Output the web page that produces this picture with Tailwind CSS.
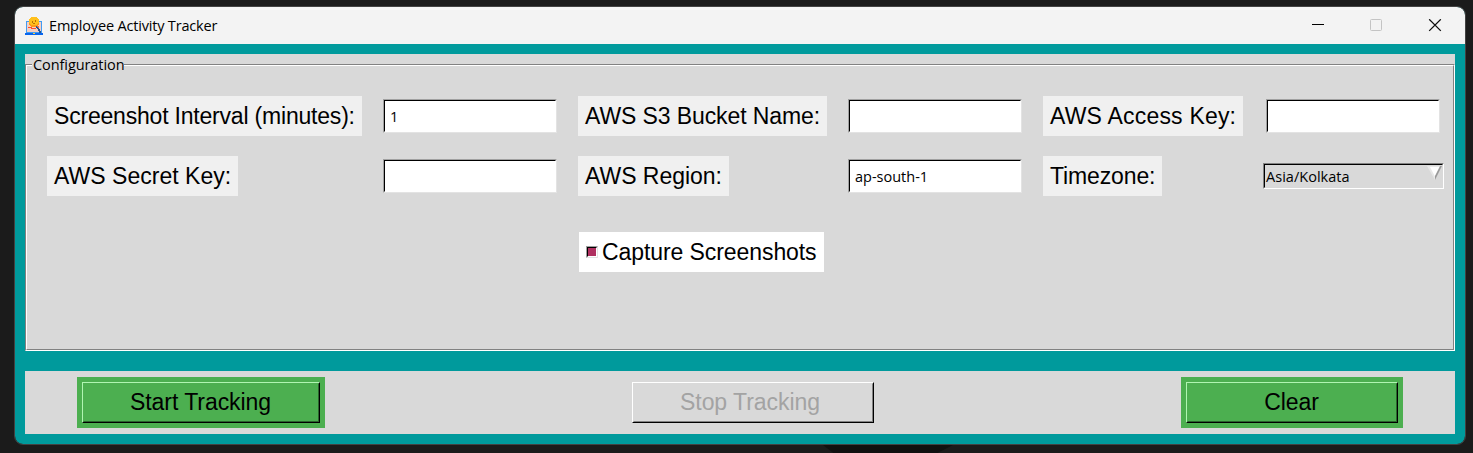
<!DOCTYPE html>
<html lang="en">
<head>
<meta charset="utf-8">
<title>Employee Activity Tracker</title>
<script src="https://cdn.jsdelivr.net/npm/@tailwindcss/browser@4"></script>
</head>
<body class="h-[453px] w-[1473px] overflow-hidden bg-[#1b1b1b] pl-[15px] pt-[7px] text-black font-['Liberation_Sans',Arial,sans-serif]">
<div class="flex h-[437px] w-[1450px] flex-col overflow-hidden rounded-lg bg-[#009a9c] outline outline-[#424242]">
  <header class="flex h-[37px] shrink-0 items-center bg-[#f3f3f3] pl-[10px] font-['Open_Sans','Noto_Sans',sans-serif]">
    <svg class="h-[18px] w-[18px]" viewBox="0 0 18 18" shape-rendering="crispEdges">
      <path d="M1 4h16v12H1z" fill="#419cf3"/>
      <path d="M2 5h14v10H2z" fill="#f5cfc3"/>
      <path d="M6 0h6v1h1v1h1v6h-1v1h-1v1H6V9H5V8H4V2h1V1h1z" fill="#ffc01c"/>
      <path d="M4 6h1v1h1v1h6V7h1V6h1v2h-1v1h-1v1H6V9H5V8H4z" fill="#ff9a15"/>
      <path d="M7 4h1v2H7zM10 3h1v2h-1zM8 6h2v1H8z" fill="#b77208"/>
      <path d="M3 10h4v1h4v1H6v-1H3z" fill="#ff4d2b"/>
      <path d="M11 9h1v1h1v1h1v1h1v2h1v2h-2v-2h-1v-2h-1v-1h-1z" fill="#27548f"/>
      <path d="M12 9h2v2h-1v-1h-1z" fill="#f26b42"/>
      <path d="M0 16h18v2H0z" fill="#0865ef"/>
      <path d="M8 16h2v1H8z" fill="#ffd339"/>
    </svg>
    <span class="ml-[6px] whitespace-nowrap text-[14.5px] tracking-[-0.18px]">Employee Activity Tracker</span>
    <div class="ml-auto flex items-center pr-[23px]">
      <svg class="h-[14px] w-[14px]" viewBox="0 0 14 14"><path d="M1 5.5h12" stroke="#000"/></svg>
      <svg class="ml-[44px] h-[14px] w-[14px]" viewBox="0 0 14 14"><rect x="1.5" y=".5" width="11" height="11" rx="1" fill="none" stroke="#c4c4c4"/></svg>
      <svg class="ml-[45px] h-[14px] w-[14px]" viewBox="0 0 14 14"><path d="M1.2.3l11.6 11.6M12.8.3L1.2 11.9" stroke="#111" stroke-width="1.3"/></svg>
    </div>
  </header>

  <main class="flex flex-col gap-5 p-[10px]">
    <section class="relative h-[297px] bg-[#d9d9d9] pt-[10px]">
      <div class="h-[287px] border border-[#828282] border-b-white border-r-white">
        <div class="h-[285px] border border-white border-b-[#828282] border-r-[#828282] pl-[20px] pt-[30px]">
          <div class="grid grid-cols-[336px_195px_270px_195px_220px_181px] grid-rows-[40px_40px] items-center gap-y-5 text-[23px] whitespace-nowrap">
            <label class="flex h-10 w-[315px] items-center bg-[#f0f0f0] pl-[7px] tracking-[-0.2px]">Screenshot Interval (minutes):</label>
            <div class="h-[34px] w-[174px] border border-[#a0a0a0] border-b-[#e3e3e3] border-r-[#e3e3e3]"><div class="flex h-8 items-center border border-black border-b-white border-r-white bg-white pl-[5px] pt-[2px] text-[14.5px] font-['Open_Sans','Noto_Sans',sans-serif]">1</div></div>
            <label class="flex h-10 w-[249px] items-center bg-[#f0f0f0] pl-[7px] tracking-[-0.1px]">AWS S3 Bucket Name:</label>
            <div class="h-[34px] w-[174px] border border-[#a0a0a0] border-b-[#e3e3e3] border-r-[#e3e3e3]"><div class="h-8 border border-black border-b-white border-r-white bg-white"></div></div>
            <label class="flex h-10 w-[200px] items-center bg-[#f0f0f0] pl-[7px] tracking-[0.2px]">AWS Access Key:</label>
            <div class="ml-[3px] h-[34px] w-[174px] border border-[#a0a0a0] border-b-[#e3e3e3] border-r-[#e3e3e3]"><div class="h-8 border border-black border-b-white border-r-white bg-white"></div></div>

            <label class="flex h-10 w-[191px] items-center bg-[#f0f0f0] pl-[7px] tracking-[0.03px]">AWS Secret Key:</label>
            <div class="h-[34px] w-[174px] border border-[#a0a0a0] border-b-[#e3e3e3] border-r-[#e3e3e3]"><div class="h-8 border border-black border-b-white border-r-white bg-white"></div></div>
            <label class="flex h-10 w-[151px] items-center bg-[#f0f0f0] pl-[7px] tracking-[-0.03px]">AWS Region:</label>
            <div class="h-[34px] w-[174px] border border-[#a0a0a0] border-b-[#e3e3e3] border-r-[#e3e3e3]"><div class="flex h-8 items-center border border-black border-b-white border-r-white bg-white pl-[5px] pt-[2px] text-[14.5px] font-['Open_Sans','Noto_Sans',sans-serif]">ap-south-1</div></div>
            <label class="flex h-10 w-[119px] items-center bg-[#f0f0f0] pl-[7px] tracking-[-0.13px]">Timezone:</label>
            <div class="h-[26px] w-[181px] border border-[#828282] border-b-white border-r-white"><div class="flex h-6 items-center justify-between border border-black border-b-[#d9d9d9] border-r-[#d9d9d9] pl-px pt-px text-[14.5px] font-['Open_Sans','Noto_Sans',sans-serif]"><span class="tracking-[0.03px]">Asia/Kolkata</span>
              <svg class="mb-[7px] h-[14px] w-[15px]" viewBox="0 0 15 14"><path d="M0 0h15L8 14z" fill="#e8e8e8"/><path d="M3 1h10L8 10.500z" fill="#fff"/><path d="M15 0L8 14V10L13 0z" fill="#9a9a9a"/></svg></div></div>
          </div>
          <label class="ml-[532px] mt-9 flex h-10 w-[245px] items-center whitespace-nowrap bg-white pl-[7px] text-[23px] tracking-[-0.08px]">
            <span class="h-3 w-3 border border-[#a0a0a0] border-b-[#e3e3e3] border-r-[#e3e3e3]"><span class="block h-[10px] w-[10px] border border-black border-b-white border-r-white bg-[#b03060]"></span></span>
            <span class="ml-[4px]">Capture Screenshots</span>
          </label>
        </div>
      </div>
      <h2 class="absolute left-[7px] top-0 h-[22px] w-[92px] whitespace-nowrap bg-[#d9d9d9] pl-px text-[14.5px] leading-[22px] tracking-[-0.08px] font-['Open_Sans','Noto_Sans',sans-serif]">Configuration</h2>
    </section>

    <section class="flex h-[63px] items-start bg-[#d9d9d9] pl-[52px] pt-[6px] text-[23px] tracking-[-0.05px]">
      <div class="h-[51px] w-[248px] bg-[#4caf50] p-[5px]"><button class="block h-[41px] w-[238px] border border-[#b0f5b2] border-b-black border-r-black"><span class="flex h-[39px] items-center justify-center border border-[#4caf50] border-b-[#2b652e] border-r-[#2b652e] pb-px pr-px">Start Tracking</span></button></div>
      <button class="ml-[307px] mt-[5px] block h-[41px] w-[242px] border border-white border-b-black border-r-black text-[#a3a3a3]"><span class="flex h-[39px] items-center justify-center border border-[#d9d9d9] border-b-[#828282] border-r-[#828282] pb-px pr-[6px]">Stop Tracking</span></button>
      <div class="ml-[307px] h-[51px] w-[222px] bg-[#4caf50] p-[5px]"><button class="block h-[41px] w-[212px] border border-[#b0f5b2] border-b-black border-r-black"><span class="flex h-[39px] items-center justify-center border border-[#4caf50] border-b-[#2b652e] border-r-[#2b652e] pb-px pr-px">Clear</span></button></div>
    </section>
  </main>
</div>
<div class="ml-[808px] mt-px h-2 w-[130px] bg-[#101010] [clip-path:polygon(0_0,100%_0,88%_100%,8%_100%)]"></div>
</body>
</html>
